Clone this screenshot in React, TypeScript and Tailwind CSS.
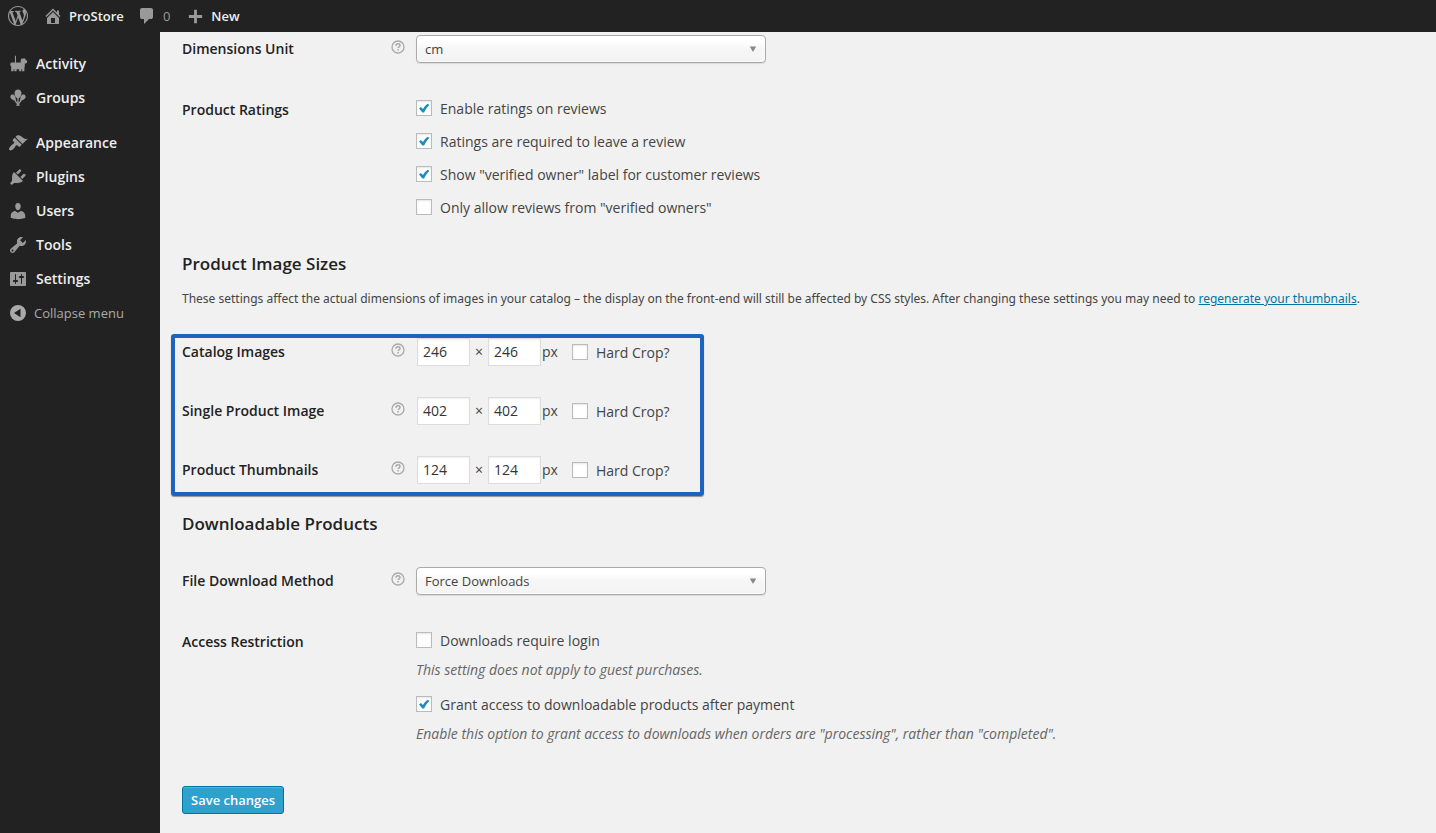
import { useId, useState } from "react";
import type { ReactNode } from "react";

type IconProps = { d: string; className?: string };

function Glyph({ d, className = "size-5" }: IconProps) {
  return (
    <svg viewBox="0 0 20 20" fill="currentColor" fillRule="evenodd" aria-hidden="true" className={`shrink-0 ${className}`}>
      <path d={d} />
    </svg>
  );
}

const icons = {
  wordpress:
    "M20 10c0-5.51-4.49-10-10-10C4.48 0 0 4.49 0 10c0 5.52 4.48 10 10 10 5.51 0 10-4.48 10-10zM7.78 15.37L4.37 6.22c.55-.02 1.17-.08 1.17-.08.5-.06.44-1.13-.06-1.11 0 0-1.45.11-2.37.11-.18 0-.37 0-.58-.01C4.12 2.69 6.87 1.11 10 1.11c2.33 0 4.45.87 6.05 2.34-.68-.11-1.65.39-1.65 1.58 0 .74.45 1.36.9 2.1.35.61.55 1.36.55 2.46 0 1.49-1.4 5-1.4 5l-3.03-8.37c.54-.02.82-.17.82-.17.5-.05.44-1.25-.06-1.22 0 0-1.44.12-2.38.12-.87 0-2.33-.12-2.33-.12-.5-.03-.56 1.2-.06 1.22l.92.08 1.26 3.41zM17.41 10c.24-.64.74-1.87.43-4.25.7 1.29 1.05 2.71 1.05 4.25 0 3.29-1.73 6.24-4.4 7.78.97-2.59 1.94-5.2 2.92-7.78zM6.1 18.09C3.12 16.65 1.11 13.53 1.11 10c0-1.3.23-2.48.72-3.59C3.25 10.3 4.67 14.2 6.1 18.09zm4.03-6.63l2.58 6.98c-.86.29-1.76.45-2.71.45-.79 0-1.57-.11-2.29-.33.81-2.38 1.62-4.74 2.42-7.1z",
  home: "M16 8.5l1.53 1.53-1.06 1.06L10 4.6l-6.47 6.49-1.06-1.06L10 2.5l4 4v-2h2v4zm-6-2.46l6 5.99V18H4v-5.97zM12 17v-5H8v5h4z",
  comment:
    "M5 2h9q.82 0 1.41.59T16 4v7q0 .82-.59 1.41T14 13h-2l-5 5v-5H5q-.82 0-1.41-.59T3 11V4q0-.82.59-1.41T5 2z",
  plus: "M17 8.5v3h-5.500v5.500h-3v-5.500H3v-3h5.500V3h3v5.500z",
  activity:
    "M6.900 1.800h1.100v6.600h4.700V6.600c0-1 .5-1.800 1.200-2.100h3.300l.4 1.300 1.500.9v1.700l-1.300 1-1 .2v2.600c0 .6-.2 1-.4 1.300v3.700h-2.300v-2h-.8v2h-2.200v-2H8.600v2H6.400v-2h-.8v2H3.200v-4.500c-.7-.6-.9-1.500-.9-2.600 0-1 .6-1.700 1.600-1.700h3z",
  groups:
    "M10 1.500c2 0 3.500 1.600 3.500 3.700 0 1.900-1.300 4-2.900 5.400v4.100c.8-1 1.400-1.900 1.600-2.800-.1-2.200.8-4.600 2.500-5.300 1.200-.3 2.600.3 2.900 1.600.3 2-1.400 3.500-4 4.300-.5 1.200-1.500 2.500-2.600 3.400l1 1.900H8l1-1.900c-1.100-.9-2.100-2.200-2.600-3.400-2.600-.8-4.300-2.300-4-4.300.3-1.300 1.700-1.900 2.900-1.600 1.700.7 2.600 3.100 2.500 5.300.2.900.8 1.800 1.600 2.800v-4.100C7.800 9.200 6.500 7.100 6.500 5.200c0-2.100 1.500-3.700 3.500-3.700z",
  appearance:
    "M14.480 11.060L7.410 3.990l1.500-1.500c.5-.56 2.300-.47 3.510.32 1.210.8 1.430 1.280 2.910 2.100 1.180.64 2.450 1.260 4.450.85zm-.71.71L6.700 4.700 4.930 6.470c-.39.39-.39 1.020 0 1.410l1.060 1.060c.39.39.39 1.030 0 1.420-.6.6-1.430 1.110-2.210 1.690-.35.26-.7.53-1.010.84C1.430 14.230.4 16.080 1.400 17.070c.99 1 2.840-.03 4.180-1.360.31-.31.58-.66.85-1.020.57-.78 1.080-1.610 1.690-2.210.39-.39 1.020-.39 1.410 0l1.060 1.060c.39.39 1.020.39 1.410 0z",
  plugins:
    "M13.110 4.360L9.870 7.600 8 5.730l3.240-3.240c.35-.34 1.050-.2 1.560.32.52.51.66 1.210.31 1.550zm-8 1.770l.91-1.120 9.010 9.010-1.190.84c-.71.71-2.630 1.160-3.820 1.160H6.140L4.900 17.260c-.59.59-1.540.59-2.120 0-.59-.58-.59-1.530 0-2.120l1.240-1.240v-3.880c0-1.130.4-3.190 1.090-3.890zm7.260 3.970l3.240-3.240c.34-.35 1.040-.21 1.550.31.52.51.66 1.210.31 1.550l-3.240 3.250z",
  users:
    "M10 9.250c-2.270 0-2.730-3.440-2.730-3.440C7 4.020 7.820 2 9.970 2c2.160 0 2.980 2.020 2.710 3.810 0 0-.41 3.440-2.680 3.440zm0 2.570L12.720 10c2.390 0 4.520 2.330 4.520 4.530v2.490s-3.650 1.130-7.240 1.130c-3.650 0-7.240-1.130-7.240-1.130v-2.490c0-2.250 1.940-4.480 4.470-4.480z",
  tools:
    "M16.680 9.770c-1.340 1.340-3.300 1.670-4.950.99l-5.410 6.520c-.99.99-2.590.99-3.580 0s-.99-2.590 0-3.570l6.520-5.420c-.68-1.650-.35-3.610.99-4.950 1.280-1.280 3.120-1.620 4.720-1.060l-2.890 2.890 2.820 2.820 2.860-2.870c.53 1.580.18 3.390-1.080 4.650zM3.810 16.210c.4.39 1.040.39 1.430 0 .4-.4.4-1.040 0-1.430-.39-.4-1.030-.4-1.430 0-.39.39-.39 1.030 0 1.430z",
  settings:
    "M18 16V4c0-.55-.45-1-1-1H3c-.55 0-1 .45-1 1v12c0 .55.45 1 1 1h14c.55 0 1-.45 1-1zM8 11h1c.55 0 1 .45 1 1s-.45 1-1 1H8v1.500c0 .28-.22.5-.5.5s-.5-.22-.5-.5V13H6c-.55 0-1-.45-1-1s.45-1 1-1h1V5.500c0-.28.22-.5.5-.5s.5.22.5.5V11zm5-2h-1c-.55 0-1-.45-1-1s.45-1 1-1h1V5.500c0-.28.22-.5.5-.5s.5.22.5.5V7h1c.55 0 1 .45 1 1s-.45 1-1 1h-1v5.500c0 .28-.22.5-.5.5s-.5-.22-.5-.5V9z",
  collapse: "M10 2a8 8 0 1 0 0 16 8 8 0 0 0 0-16zM12.500 5.800v8.400L6 10z",
};

const menuGroups = [
  [
    { label: "Activity", icon: icons.activity },
    { label: "Groups", icon: icons.groups },
  ],
  [
    { label: "Appearance", icon: icons.appearance },
    { label: "Plugins", icon: icons.plugins },
    { label: "Users", icon: icons.users },
    { label: "Tools", icon: icons.tools },
    { label: "Settings", icon: icons.settings },
  ],
];

function AdminBar() {
  return (
    <header className="flex h-8 items-center bg-[#222] pl-2 text-[13px] font-semibold text-[#eee]">
      <a href="#about" aria-label="About WordPress" className="text-[#999]">
        <Glyph d={icons.wordpress} />
      </a>
      <a href="#site" className="ml-[15px] flex items-center gap-[6px]">
        <Glyph d={icons.home} className="size-5 text-[#999]" />
        ProStore
      </a>
      <a href="#comments" className="ml-[13px] flex items-center gap-[6px] font-normal text-[#999]">
        <Glyph d={icons.comment} />
        0
      </a>
      <a href="#new" className="ml-4 flex items-center gap-[6px]">
        <Glyph d={icons.plus} className="size-[19px] text-[#999]" />
        New
      </a>
    </header>
  );
}

function Sidebar() {
  return (
    <nav aria-label="Admin menu" className="w-40 shrink-0 bg-[#222] pt-[15px]">
      {menuGroups.map((group) => (
        <ul key={group[0].label} className="mb-[11px] last-of-type:mb-0">
          {group.map(({ label, icon }) => (
            <li key={label}>
              <a href={`#${label.toLowerCase()}`} className="flex h-[34px] items-center gap-2 pl-2 text-sm font-semibold text-[#eee]">
                <Glyph d={icon} className="size-5 text-[#999]" />
                {label}
              </a>
            </li>
          ))}
        </ul>
      ))}
      <button type="button" className="flex h-[34px] items-center gap-[6px] pl-2 text-[13px] text-[#aaa]">
        <Glyph d={icons.collapse} />
        Collapse menu
      </button>
    </nav>
  );
}

function HelpTip() {
  return (
    <svg viewBox="0 0 14 14" fill="none" stroke="#aaa" role="img" aria-label="Help" className="size-[14px] shrink-0">
      <circle cx="7" cy="7" r="6" strokeWidth="1.300" />
      <path d="M5 5.700c0-1.200.9-1.900 2-1.900s2 .7 2 1.700c0 1.300-1.900 1.300-1.900 2.600" strokeWidth="1.500" />
      <path d="M7.100 9v1.500" strokeWidth="1.500" />
    </svg>
  );
}

function Field({ label, htmlFor, help = false, children }: { label: string; htmlFor?: string; help?: boolean; children: ReactNode }) {
  return (
    <div className="flex items-start">
      <div className="flex h-7 w-[234px] shrink-0 items-center justify-between pr-[11px]">
        {htmlFor ? (
          <label htmlFor={htmlFor} className="font-semibold text-[#222]">
            {label}
          </label>
        ) : (
          <span className="font-semibold text-[#222]">{label}</span>
        )}
        {help && (
          <span className="pb-1">
            <HelpTip />
          </span>
        )}
      </div>
      <div>{children}</div>
    </div>
  );
}

function Check({ label, defaultChecked = false }: { label: string; defaultChecked?: boolean }) {
  const [checked, setChecked] = useState(defaultChecked);
  return (
    <label className="flex items-start gap-2 leading-5">
      <span className="mt-px grid shrink-0">
        <input
          type="checkbox"
          checked={checked}
          onChange={(e) => setChecked(e.target.checked)}
          className="col-start-1 row-start-1 size-4 appearance-none border border-[#bbb] bg-white shadow-[inset_0_1px_2px_rgba(0,0,0,0.1)]"
        />
        {checked && (
          <svg viewBox="0 0 16 16" aria-hidden="true" className="pointer-events-none col-start-1 row-start-1 size-4">
            <path d="M3 8.400l1.900-1.500 2.100 2c1.200-2 2.700-3.800 4.800-5.200l1.500 1.200c-2.200 2.100-3.900 4.700-5.200 7.700H6.400z" fill="#1e8cbe" />
          </svg>
        )}
      </span>
      <span>{label}</span>
    </label>
  );
}

function Select({ id, options }: { id: string; options: string[] }) {
  return (
    <div className="grid w-[350px] items-center">
      <select
        id={id}
        className="col-start-1 row-start-1 h-7 w-full appearance-none rounded-[4px] border border-[#aaa] bg-linear-to-b from-white from-20% via-[#f6f6f6] via-50% to-[#f4f4f4] pl-2 text-[13px] text-[#444] shadow-[inset_0_0_3px_#fff,0_1px_1px_rgba(0,0,0,0.1)]"
      >
        {options.map((o) => (
          <option key={o}>{o}</option>
        ))}
      </select>
      <svg viewBox="0 0 8 6" aria-hidden="true" className="pointer-events-none col-start-1 row-start-1 mr-[9px] h-[6px] w-2 justify-self-end">
        <path d="M.8 .5h6.400L4.300 5.500h-.6z" fill="#888" />
      </svg>
    </div>
  );
}

function SizeInput({ id, label, value }: { id?: string; label: string; value: string }) {
  return (
    <input
      id={id}
      type="text"
      aria-label={label}
      defaultValue={value}
      className="h-7 w-[53px] border border-[#ddd] bg-white px-[5px] pb-[2px] text-sm text-[#333] shadow-[inset_0_1px_2px_rgba(0,0,0,0.07)]"
    />
  );
}

function ImageSize({ label, size }: { label: string; size: string }) {
  const id = useId();
  return (
    <Field label={label} htmlFor={id} help>
      <div className="flex h-7 items-center pl-px">
        <SizeInput id={id} label={`${label} width`} value={size} />
        <span className="w-[18px] text-center">×</span>
        <SizeInput label={`${label} height`} value={size} />
        <span className="w-[31px] pl-px">px</span>
        <div className="pt-[2px]">
          <Check label="Hard Crop?" />
        </div>
      </div>
    </Field>
  );
}

export default function App() {
  return (
    <div className="flex min-h-screen flex-col bg-[#f1f1f1] font-['Open_Sans','Noto_Sans',sans-serif] text-sm text-[#444]">
      <AdminBar />
      <div className="flex grow">
        <Sidebar />
        <main className="min-w-0 grow pt-[3px] pr-3 pb-4 pl-[22px]">
          <form onSubmit={(e) => e.preventDefault()}>
            <Field label="Dimensions Unit" htmlFor="dimensions" help>
              <Select id="dimensions" options={["cm", "m", "mm", "in", "yd"]} />
            </Field>
            <div className="mt-[33px]">
              <Field label="Product Ratings">
                <div className="flex flex-col gap-[13px] pt-[3px]">
                  <Check label="Enable ratings on reviews" defaultChecked />
                  <Check label="Ratings are required to leave a review" defaultChecked />
                  <Check label={'Show "verified owner" label for customer reviews'} defaultChecked />
                  <Check label={'Only allow reviews from "verified owners"'} />
                </div>
              </Field>
            </div>

            <h3 className="mt-[34px] text-[17px] leading-6 font-semibold text-[#222]">Product Image Sizes</h3>
            <p className="mt-[13px] font-['Noto_Sans','Open_Sans',sans-serif] text-xs leading-5">
              These settings affect the actual dimensions of images in your catalog – the display on the front-end will still be affected by CSS
              styles. After changing these settings you may need to{" "}
              <a href="#regenerate" className="text-[#0074a2] underline">
                regenerate your thumbnails
              </a>
              .
            </p>

            <section
              aria-label="Image sizes"
              className="mt-[25px] -ml-[11px] flex w-fit flex-col gap-[31px] rounded-[3px] border-4 border-[#1f63bf] pr-[30px] pb-2 pl-[7px] shadow-[0_1px_1px_rgba(0,0,0,0.4)]"
            >
              <ImageSize label="Catalog Images" size="246" />
              <ImageSize label="Single Product Image" size="402" />
              <ImageSize label="Product Thumbnails" size="124" />
            </section>

            <h3 className="mt-4 text-[17px] leading-6 font-semibold text-[#222]">Downloadable Products</h3>
            <div className="mt-[31px]">
              <Field label="File Download Method" htmlFor="download" help>
                <Select id="download" options={["Force Downloads", "X-Accel-Redirect/X-Sendfile", "Redirect only"]} />
              </Field>
            </div>
            <div className="mt-[33px]">
              <Field label="Access Restriction">
                <div className="flex flex-col gap-[9px] pt-[3px] leading-5">
                  <Check label="Downloads require login" />
                  <p className="mb-[6px] text-[#666] italic">This setting does not apply to guest purchases.</p>
                  <Check label="Grant access to downloadable products after payment" defaultChecked />
                  <p className="text-[#666] italic">
                    Enable this option to grant access to downloads when orders are "processing", rather than "completed".
                  </p>
                </div>
              </Field>
            </div>
            <button
              type="submit"
              className="mt-[42px] h-7 rounded-[3px] border border-[#0074a2] bg-[#2ea2cc] px-2 text-[13px] font-semibold text-white shadow-[inset_0_1px_0_rgba(120,200,230,0.5)]"
            >
              Save changes
            </button>
          </form>
        </main>
      </div>
    </div>
  );
}
